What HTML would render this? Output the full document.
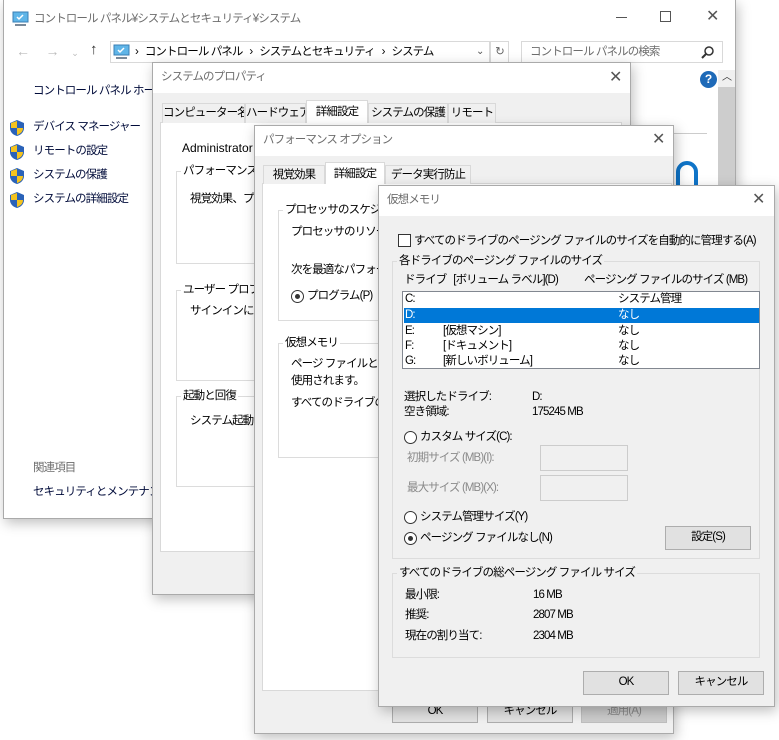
<!DOCTYPE html>
<html><head><meta charset="utf-8"><style>
*{margin:0;padding:0;box-sizing:border-box}
body{width:779px;height:740px;background:#fff;position:relative;overflow:hidden;font-family:"Liberation Sans","Noto Sans CJK JP",sans-serif;font-size:11.5px;letter-spacing:-0.9px;color:#000}
.a{position:absolute;white-space:nowrap;line-height:14px}
.w{position:absolute;border:1px solid #aaa;box-shadow:2px 4px 12px rgba(0,0,0,.25)}
.g{position:absolute;border:1px solid #dcdcdc}
.gl{position:absolute;background:inherit;padding:0 2px;line-height:14px;white-space:nowrap}
.btn{position:absolute;background:#e1e1e1;border:1px solid #adadad;text-align:center;line-height:21px;white-space:nowrap}
.tab{position:absolute;border:1px solid #d9d9d9;border-bottom:none;background:#f0f0f0;text-align:center;line-height:18px;white-space:nowrap;overflow:hidden}
.rad{position:absolute;width:13px;height:13px;border:1px solid #333;border-radius:50%;background:#fff}
.rad.on::after{content:"";position:absolute;left:3px;top:3px;width:5px;height:5px;border-radius:50%;background:#333}
.x{position:absolute;font-size:16px;color:#555;line-height:16px}
.sh{position:absolute;width:14px;height:16px}
.gray{color:#6d6d6d}
</style></head><body>

<!-- Control panel window -->
<div class="w" style="left:3px;top:0;width:733px;height:519px;background:#fff;border-top:none"></div>
<svg class="a" style="left:12px;top:11px" width="17" height="16"><rect x="1" y="1" width="15" height="10" fill="#5fb5e8" stroke="#3a7fb5"/><path d="M5 6l2 2 4-4" stroke="#fff" stroke-width="1.5" fill="none"/><rect x="3" y="13" width="11" height="2" fill="#7a8a9a"/></svg>
<div class="a gray" style="left:34px;top:12px">コントロール パネル¥システムとセキュリティ¥システム</div>
<div class="a" style="left:660px;top:11px;width:11px;height:11px;border:1px solid #555"></div>
<div class="a" style="left:616px;top:17px;width:11px;height:1px;background:#555"></div>
<div class="x" style="left:706px;top:9px">✕</div>
<div class="a" style="left:16px;top:44px;color:#bbb;font-size:14px;letter-spacing:0">←&nbsp;&nbsp;&nbsp;&nbsp;→&nbsp;&nbsp;&nbsp;<span style="font-size:9px">⌄</span></div>
<div class="a" style="left:90px;top:43px;font-size:15px;color:#333">↑</div>
<div class="a" style="left:110px;top:41px;width:380px;height:22px;border:1px solid #d9d9d9"></div>
<div class="a" style="left:490px;top:41px;width:19px;height:22px;border:1px solid #d9d9d9;color:#666;text-align:center;line-height:20px">↻</div>
<svg class="a" style="left:113px;top:44px" width="17" height="16"><rect x="1" y="1" width="15" height="10" fill="#5fb5e8" stroke="#3a7fb5"/><path d="M5 6l2 2 4-4" stroke="#fff" stroke-width="1.5" fill="none"/><rect x="3" y="13" width="11" height="2" fill="#7a8a9a"/></svg>
<div class="a" style="left:135px;top:45px">›&nbsp;&nbsp; コントロール パネル &nbsp;&nbsp;›&nbsp;&nbsp; システムとセキュリティ &nbsp;&nbsp;›&nbsp;&nbsp; システム</div>
<div class="a" style="left:476px;top:45px;color:#555;font-size:10px">⌄</div>
<div class="a" style="left:521px;top:41px;width:202px;height:22px;border:1px solid #d9d9d9"></div>
<div class="a gray" style="left:530px;top:45px">コントロール パネルの検索</div>
<svg class="a" style="left:701px;top:45px" width="14" height="14"><circle cx="8" cy="6" r="4" fill="none" stroke="#333" stroke-width="1.5"/><path d="M5 9l-4 4" stroke="#333" stroke-width="2"/></svg>
<div class="a" style="left:33px;top:84px;color:#000b3a">コントロール パネル ホーム</div>
<svg class="sh" style="left:10px;top:120px" viewBox="0 0 14 16"><path d="M7 0L0 3v5c0 4 3 7 7 8 4-1 7-4 7-8V3z" fill="#2a62b8"/><path d="M7 1v7H1V3zM7 8h6c0 4-3 6-6 7z" fill="#f5c31d"/></svg>
<svg class="sh" style="left:10px;top:144px" viewBox="0 0 14 16"><path d="M7 0L0 3v5c0 4 3 7 7 8 4-1 7-4 7-8V3z" fill="#2a62b8"/><path d="M7 1v7H1V3zM7 8h6c0 4-3 6-6 7z" fill="#f5c31d"/></svg>
<svg class="sh" style="left:10px;top:168px" viewBox="0 0 14 16"><path d="M7 0L0 3v5c0 4 3 7 7 8 4-1 7-4 7-8V3z" fill="#2a62b8"/><path d="M7 1v7H1V3zM7 8h6c0 4-3 6-6 7z" fill="#f5c31d"/></svg>
<svg class="sh" style="left:10px;top:192px" viewBox="0 0 14 16"><path d="M7 0L0 3v5c0 4 3 7 7 8 4-1 7-4 7-8V3z" fill="#2a62b8"/><path d="M7 1v7H1V3zM7 8h6c0 4-3 6-6 7z" fill="#f5c31d"/></svg>
<div class="a" style="left:33px;top:120px;color:#000b3a">デバイス マネージャー</div>
<div class="a" style="left:33px;top:144px;color:#000b3a">リモートの設定</div>
<div class="a" style="left:33px;top:168px;color:#000b3a">システムの保護</div>
<div class="a" style="left:33px;top:192px;color:#000b3a">システムの詳細設定</div>
<div class="a gray" style="left:33px;top:461px">関連項目</div>
<div class="a" style="left:33px;top:485px;color:#000b3a">セキュリティとメンテナンス</div>
<div class="a" style="left:700px;top:71px;width:17px;height:17px;border-radius:50%;background:#1e6ab8;color:#fff;font-weight:bold;text-align:center;line-height:17px;font-size:12px;letter-spacing:0">?</div>
<div class="a" style="left:718px;top:70px;width:17px;height:448px;background:#f0f0f0"></div>
<div class="a" style="left:718px;top:87px;width:17px;height:431px;background:#cdcdcd"></div>
<div class="a" style="left:722px;top:71px;font-size:10px;color:#333">︿</div>
<div class="a" style="left:673px;top:133px;width:34px;height:1px;background:#ccc"></div>
<div class="a" style="left:676px;top:161px;width:22px;height:40px;border:4px solid #0f74c8;border-radius:11px"></div>

<!-- System properties -->
<div class="w" style="left:152px;top:62px;width:479px;height:533px;background:#f0f0f0"></div>
<div class="a" style="left:153px;top:63px;width:477px;height:30px;background:#fff"></div>
<div class="a gray" style="left:161px;top:70px">システムのプロパティ</div>
<div class="x" style="left:609px;top:70px">✕</div>
<div class="a" style="left:160px;top:122px;width:462px;height:430px;background:#fff;border:1px solid #d9d9d9"></div>
<div class="tab" style="left:162px;top:103px;width:83px;height:20px">コンピューター名</div>
<div class="tab" style="left:245px;top:103px;width:61px;height:20px">ハードウェア</div>
<div class="tab" style="left:306px;top:100px;width:62px;height:23px;background:#fff;line-height:22px">詳細設定</div>
<div class="tab" style="left:368px;top:103px;width:80px;height:20px">システムの保護</div>
<div class="tab" style="left:448px;top:103px;width:48px;height:20px">リモート</div>
<div class="a" style="left:182px;top:141px;letter-spacing:0;font-size:12px">Administrator</div>
<div class="g" style="left:176px;top:171px;width:100px;height:93px;background:#fff"></div>
<div class="gl" style="left:181px;top:164px;background:#fff">パフォーマンス</div>
<div class="a" style="left:190px;top:192px">視覚効果、プ</div>
<div class="g" style="left:176px;top:290px;width:100px;height:91px"></div>
<div class="gl" style="left:181px;top:283px;background:#fff">ユーザー プロファ</div>
<div class="a" style="left:190px;top:304px">サインインに関</div>
<div class="g" style="left:176px;top:396px;width:100px;height:91px"></div>
<div class="gl" style="left:181px;top:389px;background:#fff">起動と回復</div>
<div class="a" style="left:190px;top:414px">システム起動、</div>

<!-- Performance options -->
<div class="w" style="left:254px;top:125px;width:420px;height:609px;background:#f0f0f0"></div>
<div class="a" style="left:255px;top:126px;width:418px;height:30px;background:#fff"></div>
<div class="a gray" style="left:263px;top:133px">パフォーマンス オプション</div>
<div class="x" style="left:652px;top:132px">✕</div>
<div class="a" style="left:262px;top:183px;width:410px;height:508px;background:#fff;border:1px solid #d9d9d9"></div>
<div class="tab" style="left:263px;top:165px;width:62px;height:19px">視覚効果</div>
<div class="tab" style="left:325px;top:162px;width:60px;height:22px;background:#fff;line-height:22px">詳細設定</div>
<div class="tab" style="left:385px;top:165px;width:86px;height:19px">データ実行防止</div>
<div class="g" style="left:278px;top:210px;width:110px;height:111px"></div>
<div class="gl" style="left:283px;top:203px;background:#fff">プロセッサのスケジュ</div>
<div class="a" style="left:291px;top:225px">プロセッサのリソース</div>
<div class="a" style="left:291px;top:263px">次を最適なパフォー</div>
<div class="rad on" style="left:291px;top:290px"></div>
<div class="a" style="left:307px;top:289px">プログラム(P)</div>
<div class="g" style="left:278px;top:343px;width:110px;height:115px"></div>
<div class="gl" style="left:283px;top:336px;background:#fff">仮想メモリ</div>
<div class="a" style="left:291px;top:357px">ページ ファイルとは/</div>
<div class="a" style="left:291px;top:374px">使用されます。</div>
<div class="a" style="left:291px;top:396px">すべてのドライブの総</div>
<div class="btn" style="left:392px;top:700px;width:86px;height:23px">OK</div>
<div class="btn" style="left:487px;top:700px;width:86px;height:23px">キャンセル</div>
<div class="btn" style="left:581px;top:700px;width:86px;height:23px;background:#ccc;border-color:#bfbfbf;color:#888">適用(A)</div>

<!-- Virtual memory -->
<div class="w" style="left:378px;top:185px;width:397px;height:522px;background:#f0f0f0"></div>
<div class="a" style="left:379px;top:186px;width:395px;height:30px;background:#fff"></div>
<div class="a gray" style="left:387px;top:193px">仮想メモリ</div>
<div class="x" style="left:752px;top:192px">✕</div>
<div class="a" style="left:398px;top:234px;width:13px;height:13px;border:1px solid #333;background:#fff"></div>
<div class="a" style="left:414px;top:234px">すべてのドライブのページング ファイルのサイズを自動的に管理する(A)</div>
<div class="g" style="left:392px;top:261px;width:368px;height:298px"></div>
<div class="gl" style="left:397px;top:254px;background:#f0f0f0">各ドライブのページング ファイルのサイズ</div>
<div class="a" style="left:404px;top:273px">ドライブ&nbsp;&nbsp; [ボリューム ラベル](D)</div>
<div class="a" style="left:584px;top:273px">ページング ファイルのサイズ (MB)</div>
<div class="a" style="left:402px;top:291px;width:358px;height:78px;background:#fff;border:1px solid #828790"></div>
<div class="a" style="left:404px;top:308px;width:355px;height:15px;background:#0078d7"></div>
<div class="a" style="left:405px;top:292px">C:</div><div class="a" style="left:618px;top:292px">システム管理</div>
<div class="a" style="left:405px;top:308px;color:#fff">D:</div><div class="a" style="left:618px;top:308px;color:#fff">なし</div>
<div class="a" style="left:405px;top:324px">E:</div><div class="a" style="left:443px;top:324px">[仮想マシン]</div><div class="a" style="left:618px;top:324px">なし</div>
<div class="a" style="left:405px;top:339px">F:</div><div class="a" style="left:443px;top:339px">[ドキュメント]</div><div class="a" style="left:618px;top:339px">なし</div>
<div class="a" style="left:405px;top:354px">G:</div><div class="a" style="left:443px;top:354px">[新しいボリューム]</div><div class="a" style="left:618px;top:354px">なし</div>
<div class="a" style="left:404px;top:390px">選択したドライブ:</div><div class="a" style="left:532px;top:390px">D:</div>
<div class="a" style="left:404px;top:405px">空き領域:</div><div class="a" style="left:532px;top:405px">175245 MB</div>
<div class="rad" style="left:404px;top:431px"></div>
<div class="a" style="left:420px;top:430px">カスタム サイズ(C):</div>
<div class="a" style="left:407px;top:451px;color:#8a8a8a">初期サイズ (MB)(I):</div>
<div class="a" style="left:540px;top:445px;width:88px;height:26px;border:1px solid #ccc"></div>
<div class="a" style="left:407px;top:481px;color:#8a8a8a">最大サイズ (MB)(X):</div>
<div class="a" style="left:540px;top:475px;width:88px;height:26px;border:1px solid #ccc"></div>
<div class="rad" style="left:404px;top:511px"></div>
<div class="a" style="left:420px;top:510px">システム管理サイズ(Y)</div>
<div class="rad on" style="left:404px;top:532px"></div>
<div class="a" style="left:420px;top:531px">ページング ファイルなし(N)</div>
<div class="btn" style="left:665px;top:526px;width:86px;height:24px">設定(S)</div>
<div class="g" style="left:392px;top:573px;width:368px;height:85px"></div>
<div class="gl" style="left:397px;top:566px;background:#f0f0f0">すべてのドライブの総ページング ファイル サイズ</div>
<div class="a" style="left:405px;top:588px">最小限:</div><div class="a" style="left:533px;top:588px">16 MB</div>
<div class="a" style="left:405px;top:608px">推奨:</div><div class="a" style="left:533px;top:608px">2807 MB</div>
<div class="a" style="left:405px;top:629px">現在の割り当て:</div><div class="a" style="left:533px;top:629px">2304 MB</div>
<div class="btn" style="left:583px;top:671px;width:86px;height:24px">OK</div>
<div class="btn" style="left:678px;top:671px;width:86px;height:24px">キャンセル</div>
</body></html>
